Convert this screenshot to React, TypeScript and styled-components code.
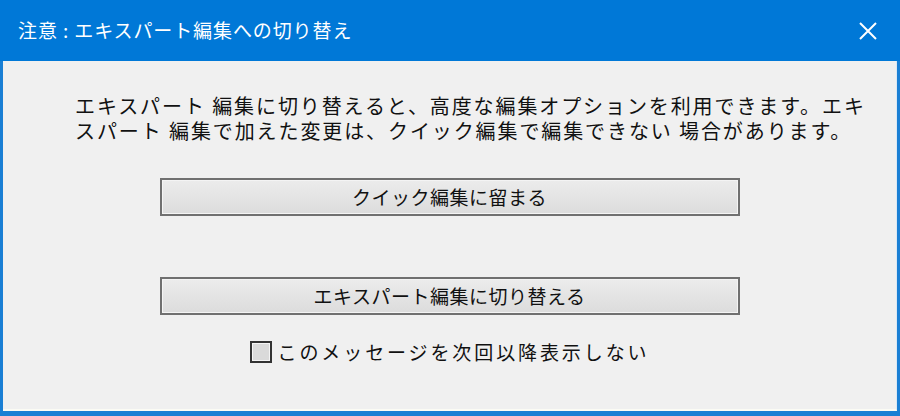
import React, { FC } from "react";
import styled, { createGlobalStyle } from "styled-components";

const GlobalStyle = createGlobalStyle`
  html, body {
    margin: 0;
    padding: 0;
    background: #f0f0f0;
  }
  body {
    font-family: "Noto Sans CJK JP", "Noto Sans", sans-serif;
  }
`;

const Window = styled.div`
  width: 900px;
  height: 416px;
  box-sizing: border-box;
  display: flex;
  flex-direction: column;
  background: #1a7fd4;
  padding: 0 3px 5px 3px;
`;

const TitleBar = styled.div`
  height: 61px;
  flex-shrink: 0;
  display: flex;
  align-items: center;
  justify-content: space-between;
  background: #0078d7;
  margin: 0 -3px;
  padding: 0 21px 0 18px;
`;

const Title = styled.div`
  color: #ffffff;
  font-size: 19px;
  letter-spacing: 0.9px;
  padding-bottom: 2px;
`;

const CloseButton = styled.div`
  width: 22px;
  height: 22px;
  display: flex;
  align-items: center;
  justify-content: center;
`;

const Body = styled.div`
  flex: 1;
  background: #f0f0f0;
  border-right: 1px solid #d9e8f5;
  border-bottom: 2px solid #fbfbf4;
  display: flex;
  flex-direction: column;
  align-items: center;
`;

const Message = styled.div`
  align-self: stretch;
  padding: 32px 0 0 72px;
  color: #111;
  font-size: 20px;
  line-height: 25px;
  letter-spacing: 1.9px;
  white-space: nowrap;
`;

const MessageLine = styled.div``;

const DialogButton = styled.div<{ $top: number }>`
  margin-top: ${(p) => p.$top}px;
  width: 580px;
  height: 38px;
  flex-shrink: 0;
  box-sizing: border-box;
  border: 2px solid #707070;
  box-shadow: inset 0 0 0 1px #f4f4f4;
  background: linear-gradient(#ececec, #dcdcdc);
  display: flex;
  align-items: center;
  justify-content: center;
  color: #111;
  font-size: 19px;
  letter-spacing: 0.5px;
  padding-bottom: 1px;
`;

const CheckRow = styled.label`
  margin-top: 23px;
  display: flex;
  align-items: center;
  gap: 6px;
  color: #111;
  font-size: 19px;
  letter-spacing: 2.9px;
`;

const CheckBox = styled.span`
  width: 22px;
  height: 22px;
  flex-shrink: 0;
  box-sizing: border-box;
  border: 2px solid #333;
  box-shadow: inset 0 0 0 1px #f4f4f4;
  background: #dadada;
`;

const App: FC = () => {
  return (
    <>
      <GlobalStyle />
      <Window>
        <TitleBar>
          <Title>注意 : エキスパート編集への切り替え</Title>
          <CloseButton>
            <svg width="18" height="18" viewBox="0 0 18 18">
              <path d="M1 1 L17 17 M17 1 L1 17" stroke="#fff" strokeWidth="2" />
            </svg>
          </CloseButton>
        </TitleBar>
        <Body>
          <Message>
            <MessageLine>
              エキスパート 編集に切り替えると、高度な編集オプションを利用できます。エキ
            </MessageLine>
            <MessageLine>
              スパート 編集で加えた変更は、クイック編集で編集できない 場合があります。
            </MessageLine>
          </Message>
          <DialogButton $top={35}>クイック編集に留まる</DialogButton>
          <DialogButton $top={61}>エキスパート編集に切り替える</DialogButton>
          <CheckRow>
            <CheckBox />
            このメッセージを次回以降表示しない
          </CheckRow>
        </Body>
      </Window>
    </>
  );
};

export default App;
